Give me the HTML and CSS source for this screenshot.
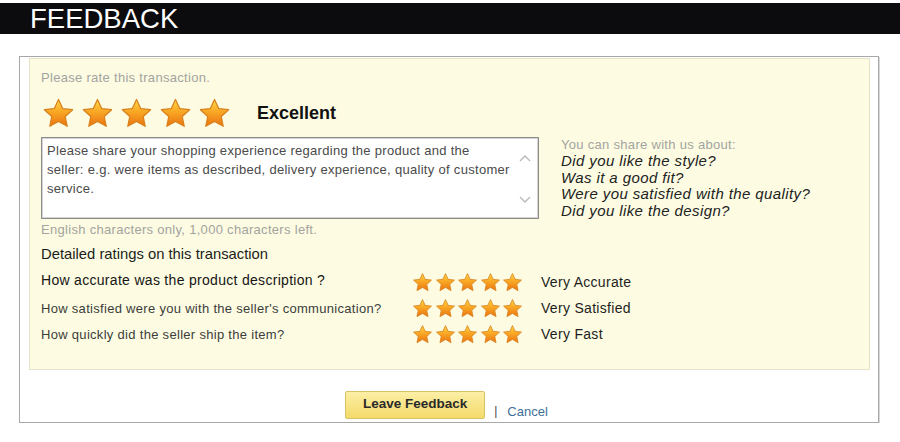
FILE: index.html
```html
<!DOCTYPE html>
<html lang="en">
<head>
    <meta charset="UTF-8">
    <meta name="viewport" content="width=device-width, initial-scale=1.0">
    <title>Feedback</title>
    <link rel="stylesheet" href="styles.css">
</head>
<body>
    <header class="title-bar">
        <h1>FEEDBACK</h1>
    </header>

    <div class="feedback-box">
        <div class="panel">
            <p class="hint">Please rate this transaction.</p>

            <div class="overall">
                <div class="stars big">
                    <svg viewBox="0 0 24 24"><use href="#star"/></svg>
                    <svg viewBox="0 0 24 24"><use href="#star"/></svg>
                    <svg viewBox="0 0 24 24"><use href="#star"/></svg>
                    <svg viewBox="0 0 24 24"><use href="#star"/></svg>
                    <svg viewBox="0 0 24 24"><use href="#star"/></svg>
                </div>
                <span class="overall-label">Excellent</span>
            </div>

            <div class="comment-row">
                <div class="comment-col">
                    <div class="comment-box">
                        <div class="comment-text">Please share your shopping experience regarding the product and the<br>seller: e.g. were items as described, delivery experience, quality of customer service.</div>
                        <div class="scroll">
                            <svg viewBox="0 0 12 8"><path d="M1 7 6 2l5 5"/></svg>
                            <svg viewBox="0 0 12 8"><path d="M1 1l5 5 5-5"/></svg>
                        </div>
                    </div>
                    <p class="hint note">English characters only, 1,000 characters left.</p>
                </div>
                <div class="tips">
                    <p class="hint">You can share with us about:</p>
                    <p class="tip">Did you like the style?</p>
                    <p class="tip">Was it a good fit?</p>
                    <p class="tip">Were you satisfied with the quality?</p>
                    <p class="tip">Did you like the design?</p>
                </div>
            </div>

            <h2 class="detail-title">Detailed ratings on this transaction</h2>

            <div class="ratings">
                <div class="question first">How accurate was the product description ?</div>
                <div class="stars small">
                    <svg viewBox="0 0 24 24"><use href="#star"/></svg>
                    <svg viewBox="0 0 24 24"><use href="#star"/></svg>
                    <svg viewBox="0 0 24 24"><use href="#star"/></svg>
                    <svg viewBox="0 0 24 24"><use href="#star"/></svg>
                    <svg viewBox="0 0 24 24"><use href="#star"/></svg>
                </div>
                <div class="answer">Very Accurate</div>

                <div class="question">How satisfied were you with the seller's communication?</div>
                <div class="stars small">
                    <svg viewBox="0 0 24 24"><use href="#star"/></svg>
                    <svg viewBox="0 0 24 24"><use href="#star"/></svg>
                    <svg viewBox="0 0 24 24"><use href="#star"/></svg>
                    <svg viewBox="0 0 24 24"><use href="#star"/></svg>
                    <svg viewBox="0 0 24 24"><use href="#star"/></svg>
                </div>
                <div class="answer">Very Satisfied</div>

                <div class="question">How quickly did the seller ship the item?</div>
                <div class="stars small">
                    <svg viewBox="0 0 24 24"><use href="#star"/></svg>
                    <svg viewBox="0 0 24 24"><use href="#star"/></svg>
                    <svg viewBox="0 0 24 24"><use href="#star"/></svg>
                    <svg viewBox="0 0 24 24"><use href="#star"/></svg>
                    <svg viewBox="0 0 24 24"><use href="#star"/></svg>
                </div>
                <div class="answer">Very Fast</div>
            </div>
        </div>

        <div class="actions">
            <button class="leave-btn">Leave Feedback</button>
            <span class="sep">|</span>
            <a class="cancel" href="#">Cancel</a>
        </div>
    </div>

    <!-- shared star shape + gradient -->
    <svg class="defs" width="0" height="0">
        <defs>
            <linearGradient id="starFill" x1="0" y1="0" x2="0" y2="1">
                <stop offset="0" stop-color="#ffd84a"/>
                <stop offset="0.45" stop-color="#f9a825"/>
                <stop offset="1" stop-color="#ea7410"/>
            </linearGradient>
            <symbol id="star" viewBox="0 0 24 24">
                <path d="M12 1.8l3.05 6.6 7.2.85-5.35 4.95 1.45 7.1L12 17.7l-6.35 3.6 1.45-7.1-5.35-4.95 7.2-.85z"
                      fill="url(#starFill)" stroke="#d8801c" stroke-width="0.9" stroke-linejoin="round"/>
            </symbol>
        </defs>
    </svg>
</body>
</html>
```

FILE: styles.css
```css
body {
    margin: 0;
    background: #fff;
    font-family: "Liberation Sans", Arial, sans-serif;
    color: #222;
}
p, h1, h2 {
    margin: 0;
}

/* top bar */
.title-bar {
    margin-top: 3px;
    height: 31px;
    background: #0c0c0e;
    padding-left: 30px;
}
.title-bar h1 {
    color: #fff;
    font-weight: normal;
    font-size: 27.5px;
    line-height: 31px;
}

/* outer white box */
.feedback-box {
    margin: 22px 21px 0 19px;
    border: 1px solid #a8a8a8;
    box-shadow: 1px 1px 0 #d8d8d8;
    padding: 1px 8px 3px 9px;
}

/* yellow panel */
.panel {
    background: #fdfce2;
    border: 1px solid #e6e3c8;
    padding: 12px 12px 22px 11px;
}
.hint {
    font-size: 13px;
    letter-spacing: 0.3px;
    line-height: 14px;
    color: #a3a3a0;
}

.overall {
    display: flex;
    align-items: center;
    margin-top: 12px;
    height: 32px;
}
.stars {
    display: flex;
}
.stars.big {
    gap: 6px;
    margin-left: 1px;
}
.stars.big svg {
    width: 33px;
    height: 33px;
}
.stars.small {
    gap: 1.5px;
}
.stars.small svg {
    width: 21px;
    height: 21px;
}
.overall-label {
    margin-left: 26px;
    font-size: 18px;
    font-weight: bold;
    color: #111;
}

/* comment area */
.comment-row {
    display: flex;
    margin-top: 8px;
}
.comment-col {
    width: 498px;
}
.comment-box {
    display: flex;
    height: 80px;
    background: #fff;
    border: 1px solid #8c8c8c;
    box-shadow: inset 0 0 0 1px #d4d4d4;
}
.comment-text {
    flex: 1;
    padding: 3px 0 0 5px;
    font-size: 13px;
    letter-spacing: 0.3px;
    line-height: 19px;
    color: #4a4a4a;
}
.scroll {
    width: 20px;
    display: flex;
    flex-direction: column;
    justify-content: space-between;
    align-items: center;
    padding: 16px 0 14px;
    margin-right: 3px;
}
.scroll svg {
    width: 12px;
    height: 8px;
    fill: none;
    stroke: #b8b8b8;
    stroke-width: 1.3;
}
.note {
    margin-top: 4px;
}

.tips {
    margin-left: 22px;
}
.tips .hint {
    line-height: 16px;
}
.tip {
    font-size: 15px;
    font-style: italic;
    letter-spacing: 0.4px;
    line-height: 16.6px;
    color: #222;
}

/* detailed ratings */
.detail-title {
    margin-top: 8px;
    font-size: 14.8px;
    font-weight: normal;
    line-height: 18px;
    color: #1c1c1c;
}
.ratings {
    display: grid;
    grid-template-columns: 371px 129px auto;
    grid-auto-rows: 26px;
    align-items: center;
    margin-top: 6px;
}
.question {
    font-size: 13px;
    letter-spacing: 0.3px;
    color: #3c3c3c;
}
.question.first {
    font-size: 14px;
    color: #151515;
    margin-top: -4px;
}
.answer {
    font-size: 14px;
    letter-spacing: 0.3px;
    color: #1e1e1e;
}

/* bottom buttons */
.actions {
    display: flex;
    justify-content: center;
    align-items: flex-end;
    margin-top: 21px;
    padding-right: 6px;
}
.leave-btn {
    width: 140px;
    height: 28px;
    background: linear-gradient(#fcefa6, #f3da6a);
    border: 1px solid #d9c167;
    border-radius: 2px;
    font-family: "Liberation Sans", Arial, sans-serif;
    font-size: 13.5px;
    font-weight: bold;
    color: #2a2a2a;
    padding: 0 0 3px;
}
.sep {
    margin: 0 10px 1px 9px;
    font-size: 12px;
    color: #444;
}
.cancel {
    margin-bottom: 0;
    font-size: 13px;
    color: #3f6f98;
    text-decoration: none;
}

.defs {
    display: block;
    width: 0;
    height: 0;
    overflow: hidden;
}
```
